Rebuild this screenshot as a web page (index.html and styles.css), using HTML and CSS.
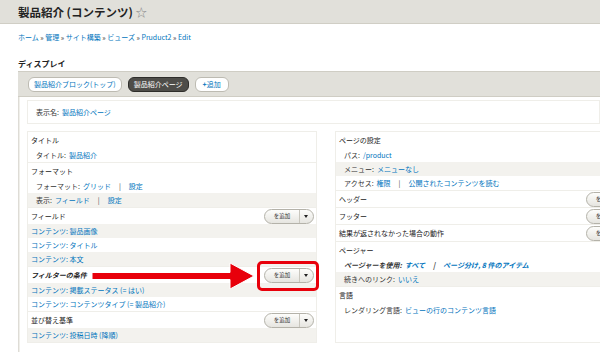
FILE: index.html
```html
<!DOCTYPE html>
<html lang="ja">
<head>
  <meta charset="UTF-8" />
  <title>製品紹介 (コンテンツ)</title>
  <link rel="stylesheet" href="styles.css">
</head>
<body>
  <header class="page-title">
    <h1>製品紹介 (コンテンツ) <span class="star">☆</span></h1>
  </header>
  <nav class="breadcrumb">
    <a href="#">ホーム</a> » <a href="#">管理</a> » <a href="#">サイト構築</a> » <a href="#">ビューズ</a> » <a href="#">Pruduct2</a> » <a href="#">Edit</a>
  </nav>
  <h2 class="section-title">ディスプレイ</h2>
  <div class="display">
    <div class="tabs">
      <a class="tab" href="#">製品紹介ブロック(トップ)</a>
      <a class="tab active" href="#">製品紹介ページ</a>
      <a class="tab add" href="#"><b>+</b> 追加</a>
    </div>
    <div class="display-body">
      <div class="name-box">表示名: <a href="#">製品紹介ページ</a></div>
      <div class="columns">
        <div class="box left">
          <div class="group">
            <div class="row heading">タイトル</div>
            <div class="row item indent">タイトル: <a href="#">製品紹介</a></div>
          </div>
          <div class="group">
            <div class="row heading">フォーマット</div>
            <div class="row item indent">フォーマット: <a href="#">グリッド</a> <span class="sep">|</span> <a href="#">設定</a></div>
            <div class="row item indent gray">表示: <a href="#">フィールド</a> <span class="sep">|</span> <a href="#">設定</a></div>
          </div>
          <div class="group">
            <div class="row heading">フィールド
              <span class="dropbutton"><span class="main">を追加</span><span class="toggle"></span></span>
            </div>
            <div class="row item gray"><a href="#">コンテンツ: 製品画像</a></div>
            <div class="row item"><a href="#">コンテンツ: タイトル</a></div>
            <div class="row item gray"><a href="#">コンテンツ: 本文</a></div>
          </div>
          <div class="group">
            <div class="row heading strong callout">フィルターの条件
              <span class="dropbutton"><span class="main">を追加</span><span class="toggle"></span></span>
              <svg class="arrow" width="166" height="30" viewBox="0 0 166 30">
                <path d="M1 11.5 H139 V2 L163 15 L139 28 V18.5 H1 Z" fill="#e8000b" stroke="#fff" stroke-width="1"/>
              </svg>
              <span class="highlight"></span>
            </div>
            <div class="row item gray"><a href="#">コンテンツ: 掲載ステータス (= はい)</a></div>
            <div class="row item"><a href="#">コンテンツ: コンテンツタイプ (= 製品紹介)</a></div>
          </div>
          <div class="group last">
            <div class="row heading">並び替え基準
              <span class="dropbutton"><span class="main">を追加</span><span class="toggle"></span></span>
            </div>
            <div class="row item gray"><a href="#">コンテンツ: 投稿日時 (降順)</a></div>
          </div>
        </div>
        <div class="box right">
          <div class="group">
            <div class="row heading">ページの設定</div>
            <div class="row item indent">パス: <a href="#">/product</a></div>
            <div class="row item indent gray">メニュー: <a href="#">メニューなし</a></div>
            <div class="row item indent">アクセス: <a href="#">権限</a> <span class="sep">|</span> <a href="#">公開されたコンテンツを読む</a></div>
          </div>
          <div class="group">
            <div class="row heading">ヘッダー
              <span class="dropbutton"><span class="main">を追加</span><span class="toggle"></span></span>
            </div>
          </div>
          <div class="group">
            <div class="row heading">フッター
              <span class="dropbutton"><span class="main">を追加</span><span class="toggle"></span></span>
            </div>
          </div>
          <div class="group">
            <div class="row heading">結果が返されなかった場合の動作
              <span class="dropbutton"><span class="main">を追加</span><span class="toggle"></span></span>
            </div>
          </div>
          <div class="group">
            <div class="row heading">ページャー</div>
            <div class="row item indent pager"><span>ページャーを使用:</span> <a href="#">すべて</a> <span class="sep">|</span> <a href="#">ページ分け, 8 件のアイテム</a></div>
            <div class="row item indent gray">続きへのリンク: <a href="#">いいえ</a></div>
          </div>
          <div class="group last">
            <div class="row heading">言語</div>
            <div class="row item indent">レンダリング言語: <a href="#">ビューの行のコンテンツ言語</a></div>
          </div>
        </div>
      </div>
    </div>
  </div>
</body>
</html>
```

FILE: styles.css
```css
* {
  box-sizing: border-box;
}
body {
  margin: 0;
  width: 600px;
  height: 352px;
  overflow: hidden;
  font-family: "Noto Sans CJK JP", "Liberation Sans", sans-serif;
  font-size: 7px;
  color: #333;
  background: #fff;
}
a {
  color: #0074bd;
  text-decoration: none;
}
.page-title {
  height: 24px;
  padding-left: 18px;
  display: flex;
  align-items: center;
  background: #e1e0da;
  border-bottom: 1px solid #d0cec5;
}
.page-title h1 {
  margin: 0;
  font-size: 11.5px;
  font-weight: bold;
  color: #222;
}
.star {
  font-weight: normal;
  color: #888;
}
.breadcrumb {
  padding: 9px 18px 0;
  line-height: 9px;
}
.section-title {
  margin: 17px 0 0 18px;
  font-size: 8px;
  line-height: 9px;
  font-weight: bold;
  color: #222;
}
.display {
  margin: 3px 0 0 18px;
}
.tabs {
  height: 26px;
  padding-left: 10px;
  display: flex;
  align-items: center;
  gap: 6px;
  background: #e1e0da;
  border-top: 1px solid #cfcdc4;
  border-bottom: 1px solid #cfcdc4;
}
.tab {
  height: 15px;
  padding: 0 5px;
  display: flex;
  align-items: center;
  border: 1px solid #bdbbb2;
  border-radius: 6px;
  background: #fff;
}
.tab.active {
  background: #4e4d49;
  border-color: #2e2d2a;
  color: #fff;
}
.tab.add {
  padding: 0 7px;
}
.display-body {
  padding: 3px 0 0 8px;
  border-left: 1px solid #dedcd6;
  box-shadow: inset 1px 0 0 #f0efea;
  min-height: 260px;
}
.name-box {
  height: 24px;
  padding-left: 8px;
  display: flex;
  align-items: center;
  gap: 3px;
  border: 1px solid #efeee9;
}
.columns {
  margin-top: 7px;
  display: flex;
  gap: 18px;
}
.box {
  border: 1px solid #efeee9;
  background: #fff;
}
.left {
  width: 290px;
  flex: none;
}
.right {
  width: 304px;
  flex: none;
}
.group {
  border-bottom: 1px solid #efeee9;
}
.group.last {
  border-bottom: none;
}
.row {
  position: relative;
  display: flex;
  align-items: center;
  gap: 3px;
  padding-left: 3px;
  white-space: nowrap;
}
.row.callout {
  z-index: 2;
}
.heading {
  height: 16px;
  color: #222;
}
.heading.strong {
  font-weight: bold;
  font-style: italic;
}
.item {
  height: 14px;
}
.indent {
  padding-left: 8px;
}
.gray {
  background: #f3f2ee;
}
.sep {
  margin: 0 5px;
  color: #444;
}
.pager {
  font-style: italic;
  font-weight: bold;
}
.pager a {
  font-weight: bold;
}
.dropbutton {
  margin-left: auto;
  margin-right: 2px;
  height: 15px;
  display: flex;
  border: 1px solid #b4b2a9;
  border-radius: 8px;
  background: linear-gradient(#fdfdfb, #e6e5e0);
  font-style: normal;
  font-weight: normal;
}
.dropbutton .main {
  width: 34px;
  display: flex;
  align-items: center;
  justify-content: center;
  font-size: 5.5px;
  color: #333;
}
.dropbutton .toggle {
  width: 14px;
  border-left: 1px solid #c8c6bd;
  position: relative;
}
.dropbutton .toggle::after {
  content: "";
  position: absolute;
  left: 4px;
  top: 5px;
  border-left: 2.5px solid transparent;
  border-right: 2.5px solid transparent;
  border-top: 3px solid #222;
}
.arrow {
  position: absolute;
  left: 63px;
  top: -6px;
}
.highlight {
  position: absolute;
  left: 229px;
  top: -6px;
  width: 62px;
  height: 30px;
  border: 3px solid #e8000b;
  border-radius: 5px;
  pointer-events: none;
}
```
